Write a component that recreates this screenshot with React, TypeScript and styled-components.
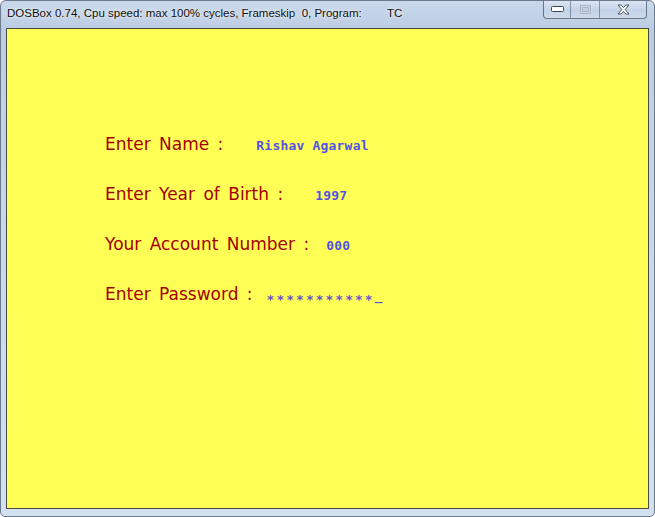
import React from "react";
import styled, { createGlobalStyle } from "styled-components";

const GlobalStyle = createGlobalStyle`
  html, body {
    margin: 0;
    padding: 0;
    background: #ffffff;
  }
`;

const Window = styled.div`
  box-sizing: border-box;
  width: 655px;
  height: 517px;
  display: flex;
  flex-direction: column;
  padding: 0 5px 7px 5px;
  border: 1px solid #6b7a8c;
  border-radius: 6px 6px 5px 5px;
  overflow: hidden;
  background: linear-gradient(
    to bottom,
    #c9d8eb 0,
    #bccde3 28px,
    #c7d6ea 40%,
    #d3e0ef 100%
  );
`;

const TitleBar = styled.div`
  height: 27px;
  display: flex;
  align-items: flex-start;
  justify-content: space-between;
`;

const Title = styled.div`
  margin-top: 5px;
  padding-left: 1px;
  font-family: "Liberation Sans", Arial, sans-serif;
  font-size: 11.5px;
  line-height: 15px;
  color: #0c0c0c;
  white-space: pre;
  text-shadow: 0 0 6px rgba(255, 255, 255, 0.9), 0 0 2px rgba(255, 255, 255, 0.8);
`;

const CaptionGroup = styled.div`
  display: flex;
  height: 18px;
  margin-top: -1px;
  margin-right: 2px;
  border: 1px solid rgba(70, 85, 105, 0.75);
  border-top: none;
  border-radius: 0 0 4px 4px;
  overflow: hidden;
  background: linear-gradient(to bottom, #dfe8f4, #c3d3e7 55%, #cddaeb);
`;

const CaptionButton = styled.div<{ $w: number }>`
  width: ${(p) => p.$w}px;
  display: flex;
  align-items: center;
  justify-content: center;
  & + & {
    border-left: 1px solid rgba(70, 85, 105, 0.55);
  }
`;

const Client = styled.div`
  flex: 1;
  display: flex;
  flex-direction: column;
  gap: 28px;
  padding: 105px 0 0 98px;
  background: #ffff55;
  border: 1px solid #4a4a44;
`;

const Row = styled.div`
  display: flex;
  align-items: baseline;
  line-height: 20px;
`;

const Label = styled.span`
  font-family: "DejaVu Sans", "Liberation Sans", sans-serif;
  font-size: 17px;
  color: #a40000;
  word-spacing: 3px;
  white-space: pre;
`;

const Value = styled.span<{ $gap: number; $spread?: number }>`
  margin-left: ${(p) => p.$gap}px;
  font-family: "DejaVu Sans Mono", "Liberation Mono", monospace;
  font-weight: bold;
  font-size: 13px;
  color: #5252e4;
  letter-spacing: ${(p) => p.$spread ?? 0.2}px;
  white-space: pre;
`;

const Stars = styled.span`
  vertical-align: -4px;
  color: #6a50cc;
`;

const MinIcon = () => (
  <svg width="13" height="6" viewBox="0 0 13 6">
    <rect x="0.5" y="0.5" width="12" height="5" rx="1" fill="#fff" stroke="#3b4656" />
  </svg>
);

const MaxIcon = () => (
  <svg width="11" height="9" viewBox="0 0 11 9">
    <rect x="0.5" y="0.5" width="10" height="8" fill="none" stroke="#a9b6c7" />
    <rect x="2.5" y="2.5" width="6" height="4" fill="#c3cfdd" stroke="#a9b6c7" />
  </svg>
);

const CloseIcon = () => (
  <svg width="13" height="11" viewBox="0 0 13 11">
    <path
      d="M1 1h3.2l2.3 2.6L8.8 1H12L8.2 5.5 12 10H8.8L6.5 7.4 4.2 10H1l3.8-4.5z"
      fill="#fff"
      stroke="#3b4656"
      strokeWidth="0.9"
      strokeLinejoin="round"
    />
  </svg>
);

export default function App() {
  return (
    <>
      <GlobalStyle />
      <Window>
        <TitleBar>
          <Title>{"DOSBox 0.74, Cpu speed: max 100% cycles, Frameskip  0, Program:        TC"}</Title>
          <CaptionGroup>
            <CaptionButton $w={26}>
              <MinIcon />
            </CaptionButton>
            <CaptionButton $w={28}>
              <MaxIcon />
            </CaptionButton>
            <CaptionButton $w={46}>
              <CloseIcon />
            </CaptionButton>
          </CaptionGroup>
        </TitleBar>
        <Client>
          <Row>
            <Label>Enter Name :</Label>
            <Value $gap={33}>Rishav Agarwal</Value>
          </Row>
          <Row>
            <Label>Enter Year of Birth :</Label>
            <Value $gap={32}>1997</Value>
          </Row>
          <Row>
            <Label>Your Account Number :</Label>
            <Value $gap={17}>000</Value>
          </Row>
          <Row>
            <Label>Enter Password :</Label>
            <Value $gap={14} $spread={2}>
              <Stars>***********</Stars>_
            </Value>
          </Row>
        </Client>
      </Window>
    </>
  );
}
